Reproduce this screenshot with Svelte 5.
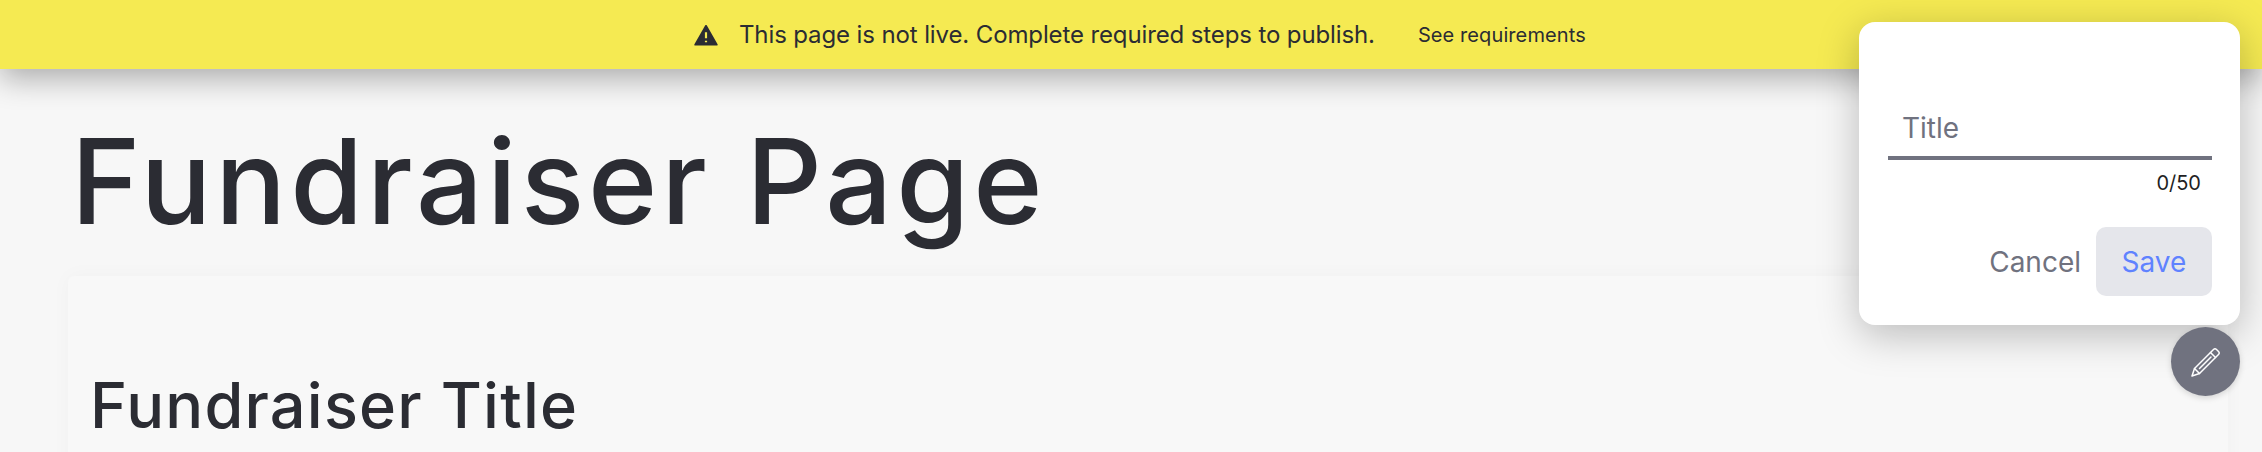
<script>
  let title = $state('');
</script>

<div class="page">
  <header class="banner">
    <svg class="warn" viewBox="0 0 24 24" width="26" height="26" aria-hidden="true"><path d="M12 3.500 L22 21 H2 Z" fill="#2b2c33" stroke="#2b2c33" stroke-width="1.600" stroke-linejoin="round"/><path d="M12 9.500v5.500M12 17.300v1.500" stroke="#f5ea52" stroke-width="2" fill="none"/></svg>
    <span class="msg">This page is not live. Complete required steps to publish.</span>
    <span class="link">See requirements</span>
  </header>
  <main class="content">
    <h1>Fundraiser Page</h1>
    <section class="card">
      <h2>Fundraiser Title</h2>
    </section>
  </main>
  <aside class="widget">
    <div class="popup">
      <label class="field">
        <input placeholder="Title" bind:value={title} />
      </label>
      <div class="count">{title.length}/50</div>
      <div class="actions">
        <button class="cancel">Cancel</button>
        <button class="save">Save</button>
      </div>
    </div>
    <button class="fab" aria-label="Edit">
      <svg viewBox="0 0 30 30" width="30" height="30" fill="none" stroke="#fff" stroke-width="1.500" stroke-linejoin="round" stroke-linecap="round"><path d="M1 29 L3.500 21.500 L22.500 2.500 Q24 1 25.500 2.500 L27.500 4.500 Q29 6 27.500 7.500 L8.500 26.500 Z"/><path d="M19.500 5.500 L24.500 10.500 M3.500 21.500 L8.500 26.500 M8.500 21.500 L20 10"/></svg>
    </button>
  </aside>
</div>

<style>
  :global(body) { margin: 0; background: #f7f7f7; overflow: hidden; }
  .page { position: relative; height: 452px; overflow: hidden; font-family: Inter, "Noto Sans", sans-serif; color: #2b2c33; }
  .banner { position: relative; z-index: 1; height: 69px; background: #f5ea52; box-shadow: 0 10px 30px rgba(0,0,0,.3); display: flex; align-items: center; padding-left: 693px; box-sizing: border-box; }
  .warn { margin-right: 20px; }
  .msg { font-size: 24px; letter-spacing: -.12px; }
  .link { font-size: 20px; margin-left: 43px; letter-spacing: .1px; }
  .content { padding: 32px 34px 0 68px; }
  h1 { font-size: 118px; font-weight: 450; line-height: 160px; margin: 0 0 0 3px; letter-spacing: 3.900px; }
  .card { margin-top: 15px; height: 300px; background: #f8f8f8; border-radius: 6px; box-shadow: 0 0 20px rgba(0,0,0,.03); padding: 89px 22px 0; }
  h2 { font-size: 63px; font-weight: 450; margin: 0; line-height: 80px; letter-spacing: 1.200px; }
  .widget { position: absolute; z-index: 2; top: 22px; right: 22px; width: 381px; display: flex; flex-direction: column; align-items: flex-end; gap: 2px; }
  .popup { width: 100%; box-sizing: border-box; height: 303px; background: #fff; border-radius: 16px; box-shadow: 0 10px 40px rgba(0,0,0,.25); padding: 78px 28px 0 29px; }
  .field { display: block; }
  input { display: block; width: 100%; box-sizing: border-box; height: 60px; border: 0; border-bottom: 4px solid #70727f; outline: 0; padding: 0 14px; font: 28px Inter, sans-serif; background: transparent; color: #2b2c33; }
  input::placeholder { color: #70727f; opacity: 1; }
  .count { font-size: 20px; text-align: right; padding-right: 11px; margin-top: 11px; line-height: 24px; color: #1f1f24; }
  .actions { display: flex; justify-content: flex-end; align-items: center; gap: 15px; margin-top: 32px; }
  button { border: 0; background: none; font: 28px Inter, sans-serif; padding: 0; }
  .cancel { color: #70727f; }
  .save { width: 116px; height: 69px; border-radius: 10px; background: #e5e6eb; color: #5f82ff; }
  .fab { width: 69px; height: 69px; border-radius: 50%; background: #70727f; display: flex; align-items: center; justify-content: center; box-shadow: 0 2px 6px rgba(0,0,0,.15); }
</style>
